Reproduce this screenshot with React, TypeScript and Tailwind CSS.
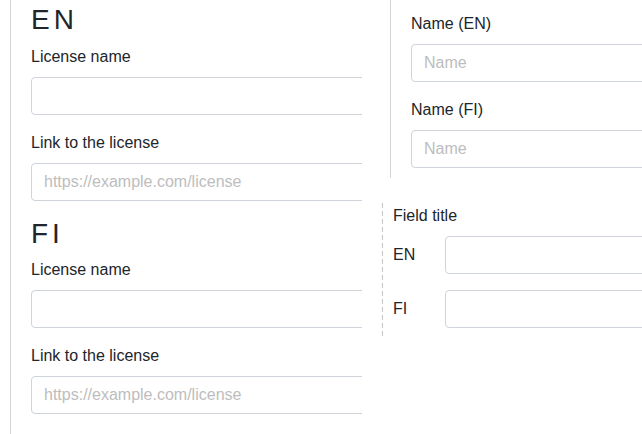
import React from "react";

const font = { fontFamily: '"Liberation Sans", Arial, Helvetica, sans-serif' };

function Field({ label, placeholder }: { label: string; placeholder?: string }) {
  return (
    <div className="mb-4">
      <label className="mb-2 block text-[16px] leading-6 text-[#212529]">{label}</label>
      <input
        className="block h-[38px] w-[420px] rounded-[4px] border border-[#ced4da] bg-white px-3 text-[16px] text-[#212529] outline-none placeholder:text-[#bdbdbd]"
        placeholder={placeholder}
      />
    </div>
  );
}

function LangSection({ lang }: { lang: string }) {
  return (
    <div>
      <h2 className="mb-2 text-[28px] leading-[1.2] tracking-[4px] text-[#212529]">{lang}</h2>
      <Field label="License name" />
      <Field label="Link to the license" placeholder="https://example.com/license" />
    </div>
  );
}

export default function App() {
  return (
    <div className="relative h-[434px] w-[642px] overflow-hidden bg-white" style={font}>
      <div className="absolute left-[10px] top-0 h-[434px] w-[352px] overflow-hidden border-l border-[#d4d4d4] pl-[20px] pt-[3px]">
        <LangSection lang="EN" />
        <LangSection lang="FI" />
      </div>

      <div className="absolute left-[390px] top-0 h-[178px] w-[300px] overflow-hidden border-l border-[#d4d4d4] pl-[20px] pt-[12px]">
        <Field label="Name (EN)" placeholder="Name" />
        <Field label="Name (FI)" placeholder="Name" />
      </div>

      <div className="absolute left-[382px] top-[203px] h-[133px] w-[300px] overflow-hidden bg-[linear-gradient(to_bottom,#c4c4c4_0_5px,transparent_5px_8px)] bg-[length:1px_8px] bg-left-top bg-repeat-y pl-[11px] pt-[1px]">
        <div className="mb-2 text-[16px] leading-6 text-[#212529]">Field title</div>
        <div className="flex flex-col gap-4">
          <div className="flex items-center">
            <span className="w-[52px] shrink-0 text-[16px] leading-6 text-[#212529]">EN</span>
            <input className="h-[38px] w-[300px] shrink-0 rounded-[4px] border border-[#ced4da] bg-white px-3 outline-none" />
          </div>
          <div className="flex items-center">
            <span className="w-[52px] shrink-0 text-[16px] leading-6 text-[#212529]">FI</span>
            <input className="h-[38px] w-[300px] shrink-0 rounded-[4px] border border-[#ced4da] bg-white px-3 outline-none" />
          </div>
        </div>
      </div>
    </div>
  );
}
